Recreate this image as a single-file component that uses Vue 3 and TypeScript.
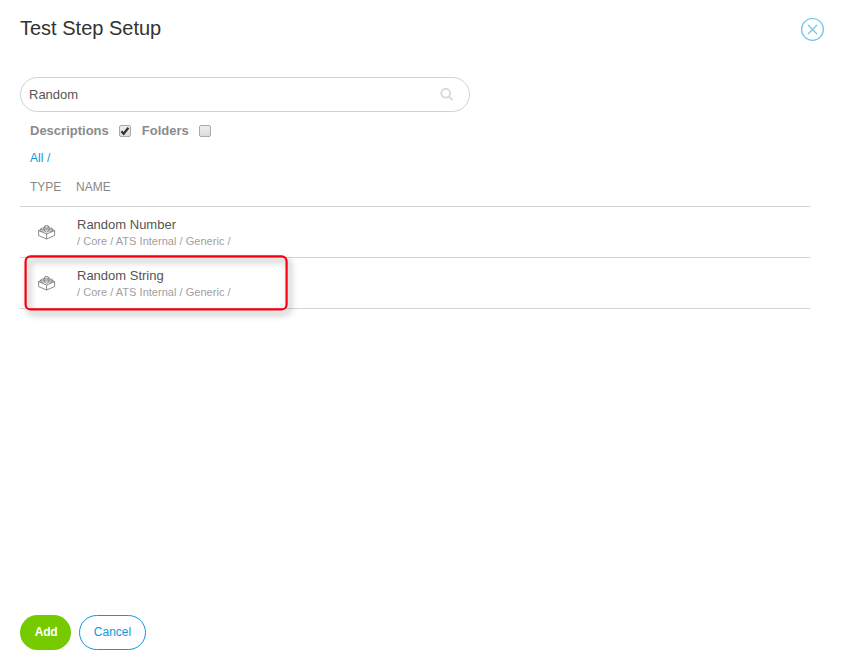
<script setup lang="ts">
import { ref } from 'vue'

interface Step {
  name: string
  path: string
  highlighted: boolean
}

const query = ref('Random')
const descriptions = ref(true)
const folders = ref(false)
const steps: Step[] = [
  { name: 'Random Number', path: '/ Core / ATS Internal / Generic /', highlighted: false },
  { name: 'Random String', path: '/ Core / ATS Internal / Generic /', highlighted: true },
]
</script>

<template>
  <main class="dialog">
    <header class="header">
      <h1>Test Step Setup</h1>
      <button class="close" aria-label="Close">
        <svg width="23" height="24" viewBox="0 0 23 24">
          <circle cx="11.5" cy="12.4" r="10.9" />
          <path d="M7 8l9 9M16 8l-9 9" />
        </svg>
      </button>
    </header>

    <div class="search">
      <input v-model="query" type="text" aria-label="Search" />
      <svg width="15" height="15" viewBox="0 0 15 15">
        <circle cx="5.7" cy="6.2" r="4.4" />
        <path d="M8.9 9.5l3.7 3.7" />
      </svg>
    </div>

    <div class="filters">
      <label>Descriptions
        <input v-model="descriptions" type="checkbox" />
        <span class="box"><svg v-if="descriptions" width="10" height="10" viewBox="0 0 10 10"><path d="M1.4 5.3l2.3 2.5L8.4 1.8" /></svg></span>
      </label>
      <label>Folders
        <input v-model="folders" type="checkbox" />
        <span class="box"><svg v-if="folders" width="10" height="10" viewBox="0 0 10 10"><path d="M1.4 5.3l2.3 2.5L8.4 1.8" /></svg></span>
      </label>
    </div>

    <nav class="crumbs"><a>All /</a></nav>

    <section class="table">
      <div class="head"><span class="type">TYPE</span><span>NAME</span></div>
      <div v-for="step in steps" :key="step.name" class="row">
        <svg class="brick" width="18" height="16" viewBox="0 0 18 16">
          <path d="M.6 5.6v5L8.6 14l8-3.4v-5L8.6 9zM8.6 9v5M.6 5.6l2-.9M16.6 5.6l-2-.9M5.1 3.1l1-.4M12.1 3.1l-1-.4" />
          <path d="M6.5 1.4v1.7c0 1 4.2 1 4.2 0V1.4M2.7 4v1.5c0 1 3.7 1 3.7 0V4M10.8 4v1.5c0 1 3.7 1 3.7 0V4" />
          <ellipse cx="8.6" cy="1.4" rx="2.1" ry=".9" />
          <ellipse cx="4.5" cy="4" rx="1.9" ry=".9" />
          <ellipse cx="12.7" cy="4" rx="1.9" ry=".9" />
          <ellipse cx="8.6" cy="5.9" rx="2" ry="1.1" />
        </svg>
        <div class="info">
          <div class="name">{{ step.name }}</div>
          <div class="path">{{ step.path }}</div>
        </div>
        <svg v-if="step.highlighted" class="highlight" width="272" height="64" viewBox="0 0 272 64">
          <rect x="5.6" y="5.4" width="261" height="53" rx="5" />
        </svg>
      </div>
    </section>

    <footer class="actions">
      <button class="add">Add</button>
      <button class="cancel">Cancel</button>
    </footer>
  </main>
</template>

<style>
body {
  background: #fff;
}
</style>

<style scoped>
.dialog {
  box-sizing: border-box;
  width: 845px;
  height: 670px;
  padding: 17px 20px 20px;
  display: flex;
  flex-direction: column;
  font-family: "Liberation Sans", Arial, sans-serif;
  font-size: 13px;
  color: #555;
}
button {
  font-family: inherit;
  cursor: pointer;
}
.header {
  display: flex;
  justify-content: space-between;
  height: 60px;
}
h1 {
  margin: 0;
  font-size: 20px;
  line-height: 23px;
  font-weight: 400;
  color: #333;
}
.close {
  width: 24px;
  height: 24px;
  padding: 0;
  border: 0;
  background: none;
}
.close svg {
  display: block;
  fill: none;
  stroke: #70c5e8;
  stroke-width: 1.2;
  overflow: visible;
}
.search {
  box-sizing: border-box;
  width: 450px;
  height: 35px;
  border: 1px solid #d2d2d2;
  border-radius: 18px;
  display: flex;
  align-items: center;
  padding: 0 14px 0 8px;
}
.search input {
  flex: 1;
  min-width: 0;
  padding: 0;
  border: 0;
  outline: 0;
  background: none;
  font: inherit;
  color: #555;
}
.search svg {
  fill: none;
  stroke: #d8d8d8;
  stroke-width: 1.9;
}
.filters {
  display: flex;
  gap: 11px;
  height: 15px;
  margin: 11px 0 0 10px;
}
.filters label {
  display: flex;
  align-items: center;
  gap: 10px;
  line-height: 15px;
  font-weight: 700;
  color: #8b8b8b;
}
.filters input {
  display: none;
}
.box {
  box-sizing: border-box;
  width: 12px;
  height: 12px;
  margin-top: 1px;
  border: 1px solid #a9a9a9;
  border-radius: 2px;
  background: linear-gradient(#eee, #dcdcdc);
}
.box svg {
  display: block;
  fill: none;
  stroke: #333;
  stroke-width: 2.2;
}
.crumbs {
  margin: 13px 0 0 10px;
  height: 14px;
  font-size: 12px;
  line-height: 14px;
  letter-spacing: 0.1px;
  color: #0d9ade;
}
.table {
  width: 790px;
  margin-top: 15px;
}
.head {
  display: flex;
  height: 26px;
  padding-left: 10px;
  border-bottom: 1px solid #d5d5d5;
  font-size: 12px;
  line-height: 14px;
  color: #888;
}
.type {
  width: 46px;
}
.row {
  position: relative;
  display: flex;
  height: 50px;
  padding-left: 18px;
  border-bottom: 1px solid #d5d5d5;
}
.brick {
  width: 18px;
  height: 16px;
  margin: 18px 21px 0 0;
  fill: none;
  stroke: #666;
  stroke-width: 0.75;
  overflow: visible;
}
.info {
  padding-top: 10px;
}
.name {
  line-height: 15px;
}
.path {
  margin-top: 3px;
  font-size: 11px;
  line-height: 13px;
  letter-spacing: 0.03px;
  color: #a0a0a0;
}
.highlight {
  position: absolute;
  left: 0;
  top: -7px;
  overflow: visible;
  fill: none;
  stroke: #f80008;
  stroke-width: 2.2;
  filter: drop-shadow(3px 4px 3px rgba(0, 0, 0, 0.4));
}
.actions {
  display: flex;
  gap: 8px;
  margin-top: auto;
}
.actions button {
  box-sizing: border-box;
  height: 35px;
  padding: 0 0 1px;
  border-radius: 18px;
  font-size: 12px;
}
.actions .add {
  width: 51px;
  padding-left: 1px;
  border: 0;
  background: #75cb00;
  color: #fff;
  font-weight: 700;
  letter-spacing: -0.3px;
}
.actions .cancel {
  width: 67px;
  border: 1px solid #0d9ade;
  background: #fff;
  color: #0d9ade;
}
</style>
